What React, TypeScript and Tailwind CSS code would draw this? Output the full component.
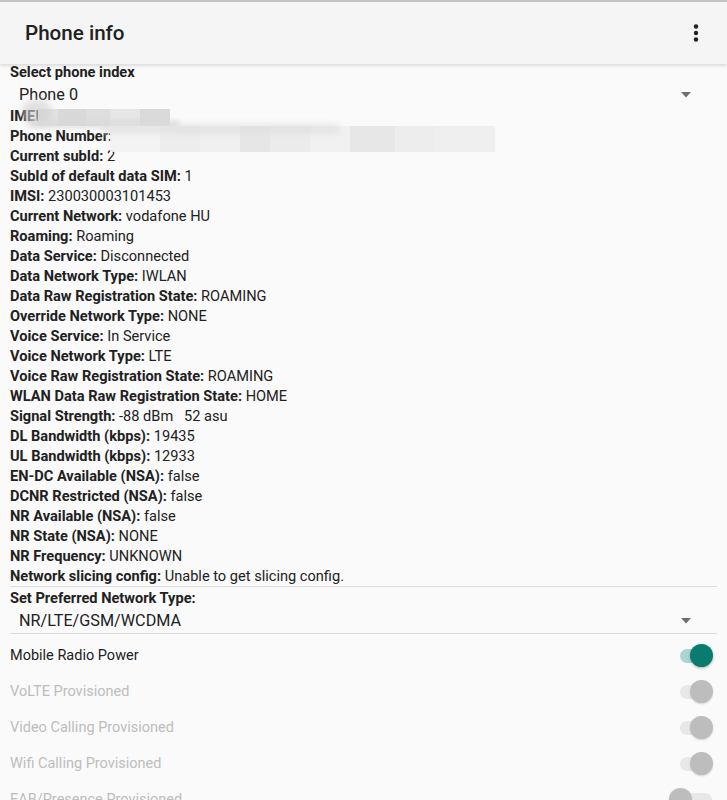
import React from "react";

const rows: [string, string][] = [
  ["Current subId:", "2"],
  ["SubId of default data SIM:", "1"],
  ["IMSI:", "230030003101453"],
  ["Current Network:", "vodafone HU"],
  ["Roaming:", "Roaming"],
  ["Data Service:", "Disconnected"],
  ["Data Network Type:", "IWLAN"],
  ["Data Raw Registration State:", "ROAMING"],
  ["Override Network Type:", "NONE"],
  ["Voice Service:", "In Service"],
  ["Voice Network Type:", "LTE"],
  ["Voice Raw Registration State:", "ROAMING"],
  ["WLAN Data Raw Registration State:", "HOME"],
  ["Signal Strength:", "-88 dBm\u00a0\u00a0\u00a052 asu"],
  ["DL Bandwidth (kbps):", "19435"],
  ["UL Bandwidth (kbps):", "12933"],
  ["EN-DC Available (NSA):", "false"],
  ["DCNR Restricted (NSA):", "false"],
  ["NR Available (NSA):", "false"],
  ["NR State (NSA):", "NONE"],
  ["NR Frequency:", "UNKNOWN"],
  ["Network slicing config:", "Unable to get slicing config."],
];

function Triangle() {
  return (
    <svg width="10" height="6" viewBox="0 0 10 6" className="mr-[26px]">
      <path d="M0 0 L10 0 L5 5.5 Z" fill="#6f6f6f" />
    </svg>
  );
}

function Toggle({ enabled, left }: { enabled?: boolean; left?: boolean }) {
  return (
    <div className="relative w-[36px] h-[24px] mr-[13px]">
      <div
        className={`absolute left-[2px] top-[5px] w-[32px] h-[14px] rounded-full ${
          enabled ? "bg-[#a9d8d2]" : "bg-[#e8e8e8]"
        }`}
      />
      <div
        className={`absolute top-0 w-[23px] h-[23px] rounded-full ${
          left ? "left-[-9px]" : "left-[12px]"
        } ${enabled ? "bg-[#097c6f] shadow-[0_1px_3px_rgba(0,0,0,0.3)]" : "bg-[#bdbdbd] shadow-[0_1px_2px_rgba(0,0,0,0.15)]"}`}
      />
    </div>
  );
}

export default function App() {
  const font = { fontFamily: "Roboto, 'Noto Sans', sans-serif" };
  return (
    <div className="w-[727px] h-[800px] overflow-hidden bg-[#fafafa] text-[#212121]" style={font}>
      <div className="h-[2px] bg-[#c4c4c4]" />
      <div className="relative z-10 h-[62px] bg-[#f5f5f5] flex items-center justify-between shadow-[0_2px_3px_rgba(0,0,0,0.12)]">
        <div className="pl-[25px] text-[20.6px] font-medium text-[#212121]">Phone info</div>
        <svg width="6" height="18" viewBox="0 0 6 18" className="mr-[28px]">
          <circle cx="3" cy="2.5" r="2.2" fill="#222" />
          <circle cx="3" cy="9" r="2.2" fill="#222" />
          <circle cx="3" cy="15.5" r="2.2" fill="#222" />
        </svg>
      </div>

      <div className="relative px-[10px]">
        <div className="text-[14.6px] leading-[16px] font-bold">Select phone index</div>
        <div className="flex items-center justify-between h-[26px] pl-[9px] pt-[4px]">
          <span className="text-[16.2px]">Phone 0</span>
          <Triangle />
        </div>

        <div className="text-[14.6px] leading-[20px]">
          <div className="relative">
            <span className="font-bold">IMEI: </span>
            <span className="text-[#999]">35</span>
          </div>
          <div>
            <span className="font-bold">Phone Number:</span>
          </div>
          {rows.map(([k, v]) => (
            <div key={k} className="whitespace-nowrap">
              <span className="font-bold">{k}</span> {v}
            </div>
          ))}
        </div>

        {/* redaction overlay */}
        <div className="absolute left-[38px] top-[45px] w-[132px] h-[17px] flex">
          <div className="w-[20px] bg-[#e2e2e2]" />
          <div className="w-[28px] bg-[#d9d9d9]" />
          <div className="w-[24px] bg-[#dedede]" />
          <div className="w-[30px] bg-[#e6e6e6]" />
          <div className="w-[30px] bg-[#dadada]" />
        </div>
        <div className="absolute left-[22px] top-[36px] w-[30px] h-[26px] rounded-full bg-[#cfcfcf] opacity-60 blur-[3px]" />
        <div className="absolute left-[30px] top-[56px] w-[150px] h-[8px] rounded-full bg-[#d8d8d8] opacity-70 blur-[2px]" />
        <div className="absolute left-[110px] top-[62px] w-[385px] h-[26px] flex opacity-90">
          <div className="w-[50px] bg-[#f3f3f3]" />
          <div className="w-[40px] bg-[#ececec]" />
          <div className="w-[40px] bg-[#f0f0f0]" />
          <div className="w-[30px] bg-[#e4e4e4]" />
          <div className="w-[40px] bg-[#eaeaea]" />
          <div className="w-[40px] bg-[#f1f1f1]" />
          <div className="w-[45px] bg-[#e6e6e6]" />
          <div className="w-[40px] bg-[#ececec]" />
          <div className="w-[60px] bg-[#eeeeee]" />
        </div>
        <div className="absolute left-[100px] top-[60px] w-[240px] h-[10px] rounded-full bg-[#e0e0e0] opacity-70 blur-[3px]" />

        <div className="h-px bg-[#dcdcdc]" />
        <div className="text-[14.6px] leading-[20px] font-bold mt-[1px]">Set Preferred Network Type:</div>
        <div className="flex items-center justify-between h-[25px] pl-[9px] pt-[1px]">
          <span className="text-[16.2px]">NR/LTE/GSM/WCDMA</span>
          <Triangle />
        </div>
        <div className="h-px bg-[#dcdcdc]" />
      </div>

      <div className="pt-[4px] pl-[10px] text-[14.5px]">
        <div className="flex items-center justify-between h-[36px]">
          <span className="text-[#212121]">Mobile Radio Power</span>
          <Toggle enabled />
        </div>
        <div className="flex items-center justify-between h-[36px]">
          <span className="text-[#bdbdbd]">VoLTE Provisioned</span>
          <Toggle />
        </div>
        <div className="flex items-center justify-between h-[36px]">
          <span className="text-[#bdbdbd]">Video Calling Provisioned</span>
          <Toggle />
        </div>
        <div className="flex items-center justify-between h-[36px]">
          <span className="text-[#bdbdbd]">Wifi Calling Provisioned</span>
          <Toggle />
        </div>
        <div className="flex items-center justify-between h-[36px]">
          <span className="text-[#bdbdbd]">EAB/Presence Provisioned</span>
          <Toggle left />
        </div>
      </div>
    </div>
  );
}
